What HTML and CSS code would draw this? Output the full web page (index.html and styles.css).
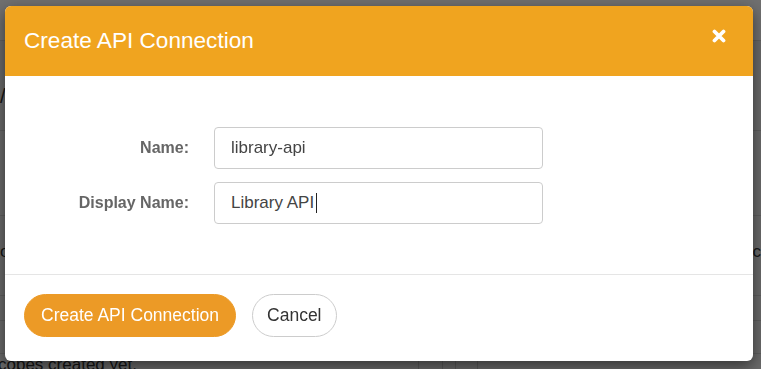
FILE: index.html
```html
<!DOCTYPE html>
<html lang="en">
<head>
  <meta charset="UTF-8">
  <meta name="viewport" content="width=device-width, initial-scale=1.0">
  <title>Create API Connection</title>
  <link rel="stylesheet" href="styles.css">
</head>
<body>
  <!-- page behind the dialog -->
  <div class="page">
    <div class="page-nav"></div>
    <div class="page-row row-title"><span class="edge-text">/</span></div>
    <div class="page-row row-mid"></div>
    <div class="page-row row-info"><span class="edge-text">o</span><span class="edge-text">pc</span></div>
    <div class="page-row row-thin"></div>
    <div class="page-row row-table"></div>
    <div class="page-empty">
      <div class="empty-text">copes created yet.</div>
      <div class="empty-cell cell-a"></div>
      <div class="empty-cell cell-b"></div>
      <div class="empty-cell cell-c"></div>
      <div class="empty-cell cell-d"></div>
    </div>
  </div>

  <div class="backdrop"></div>

  <div class="modal">
    <div class="modal-header">
      <h4 class="modal-title">Create API Connection</h4>
      <button class="close" type="button" aria-label="Close">
        <svg width="14" height="14" viewBox="0 0 14 14">
          <path d="M2.5 2.5 L11.5 11.5 M11.5 2.5 L2.5 11.5" stroke="#fff" stroke-width="3.8" stroke-linecap="round" fill="none"/>
        </svg>
      </button>
    </div>
    <form class="modal-body">
      <label class="field-label" for="conn-name">Name:</label>
      <input class="field-input" id="conn-name" type="text" value="library-api">
      <label class="field-label" for="conn-display">Display Name:</label>
      <div class="input-wrap">
        <input class="field-input" id="conn-display" type="text" value="Library API">
        <span class="caret"></span>
      </div>
    </form>
    <div class="modal-footer">
      <button class="btn btn-primary" type="button">Create API Connection</button>
      <button class="btn btn-default" type="button">Cancel</button>
    </div>
  </div>
</body>
</html>
```

FILE: styles.css
```css
body {
  margin: 0;
  font-family: 'Liberation Sans', Arial, sans-serif;
  background: #f2f2f2;
  color: #333;
  overflow: hidden;
}

/* page behind the dialog */
.page {
  width: 761px;
}
.page-nav {
  height: 41px;
  background: #fff;
  border-bottom: 1px solid #ddd;
  box-sizing: border-box;
}
.page-row {
  box-sizing: border-box;
  border-bottom: 1px solid #d6d6d6;
  display: flex;
  justify-content: space-between;
  align-items: center;
  font-size: 17px;
}
.row-title {
  height: 90px;
  align-items: flex-end;
  padding-bottom: 22px;
  font-size: 20px;
}
.row-mid {
  height: 85px;
}
.row-info {
  height: 80px;
  padding-bottom: 8px;
}
.row-thin {
  height: 25px;
}
.row-table {
  height: 33px;
}
.edge-text {
  color: #333;
}
.page-empty {
  display: flex;
  height: 30px;
}
.empty-text {
  width: 418px;
  padding-top: 1px;
  font-size: 17px;
  text-indent: -2px;
}
.empty-cell {
  border-left: 1px solid #ccc;
}
.cell-a { width: 23px; }
.cell-b { width: 12px; }
.cell-c { width: 21px; }
.cell-d { flex: 1; }

.backdrop {
  position: fixed;
  inset: 0;
  background: rgba(0, 0, 0, 0.56);
}

/* dialog */
.modal {
  position: fixed;
  left: 5px;
  top: 6px;
  width: 748px;
  background: #fff;
  border-radius: 6px;
  overflow: hidden;
  box-shadow: 0 5px 15px rgba(0, 0, 0, 0.5);
}
.modal-header {
  height: 70px;
  box-sizing: border-box;
  padding: 0 27px 0 19px;
  background: #f0a41f;
  display: flex;
  align-items: center;
  justify-content: space-between;
}
.modal-title {
  margin: 0;
  font-size: 22.6px;
  font-weight: normal;
  color: #fff;
  padding-bottom: 1px;
}
.close {
  border: none;
  background: none;
  padding: 0;
  width: 14px;
  height: 14px;
  display: flex;
  cursor: pointer;
  margin-top: -11px;
}

.modal-body {
  margin: 0;
  padding: 51px 0 50px;
  display: grid;
  grid-template-columns: 184px 329px;
  column-gap: 25px;
  row-gap: 13px;
  align-items: center;
}
.field-label {
  text-align: right;
  font-size: 16px;
  font-weight: bold;
  color: #666;
}
.field-input {
  width: 100%;
  height: 42px;
  box-sizing: border-box;
  border: 1px solid #ccc;
  border-radius: 4px;
  padding: 0 16px;
  font-family: 'Liberation Sans', Arial, sans-serif;
  font-size: 17px;
  color: #444;
  outline: none;
}
.input-wrap {
  position: relative;
}
.caret {
  position: absolute;
  left: 102px;
  top: 11px;
  width: 1px;
  height: 20px;
  background: #222;
}

.modal-footer {
  border-top: 1px solid #e5e5e5;
  padding: 19px 19px 24px;
  display: flex;
  gap: 16px;
}
.btn {
  height: 43px;
  padding: 0 16px;
  border-radius: 22px;
  font-family: 'Liberation Sans', Arial, sans-serif;
  font-size: 17.5px;
  cursor: pointer;
}
.btn-primary {
  background: #ec9a26;
  border: 1px solid #ec9a26;
  color: #fff;
}
.btn-default {
  padding: 0 14px;
  background: #fff;
  border: 1px solid #ccc;
  color: #333;
}
```
